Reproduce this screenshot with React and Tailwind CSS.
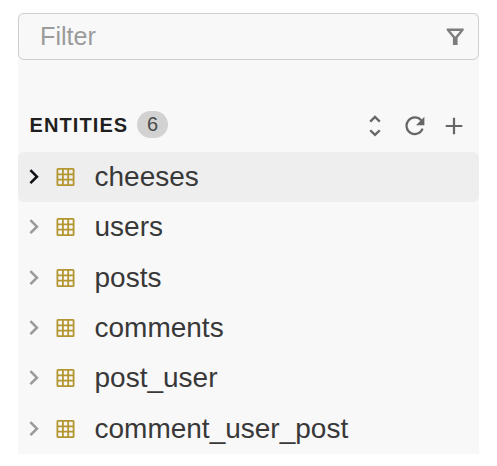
import React from "react";

const entities = ["cheeses", "users", "posts", "comments", "post_user", "comment_user_post"];

function Chevron({ active }) {
  return (
    <svg width="12" height="18" viewBox="0 0 12 18" fill="none" strokeWidth="2.6" className={active ? "stroke-[#111118]" : "stroke-[#9b9b9b]"}>
      <path d="M2.4 2.2 8.9 8.7 2.4 15.2" />
    </svg>
  );
}

function TableIcon() {
  return (
    <svg width="18" height="18" viewBox="0 0 18 18" fill="none" stroke="#b3962f" strokeWidth="1.8" className="overflow-visible">
      <rect x="0.4" y="0.9" width="16.2" height="16.2" rx="0.6" />
      <path d="M5.9 1v16M11.2 1v16M0.6 6.4h16M0.6 11.7h16" />
    </svg>
  );
}

function FilterIcon() {
  return (
    <svg width="18" height="18" viewBox="0 0 18 18">
      <path fill="#7d7d7d" fillRule="evenodd" d="M0.7 0.5h17v1.7l-6.1 7.6V17H6.9V9.8L0.7 2.2ZM4.3 2.9 9.2 8.8l4.9-5.9Z" />
    </svg>
  );
}

export default function App() {
  return (
    <div className="h-[466px] w-[497px] bg-white pt-[13px] pl-[18px] font-['Liberation_Sans',Arial,sans-serif]">
      <div className="h-[441px] w-[461px] bg-[#f8f8f8]">
        <div className="flex h-[47px] items-center justify-between rounded-[6px] border border-[#cecece] pr-[14px] pl-[21px]">
          <span className="text-[25.2px] leading-[45px] text-[#9b9b9b]">Filter</span>
          <FilterIcon />
        </div>
        <div className="mt-[51px] flex h-[27px] items-center pl-[11px]">
          <span className="w-[100px] pt-px pl-[0.5px] text-[20px] leading-[27px] font-bold tracking-[1.1px] text-[#1f1f1f]">ENTITIES</span>
          <span className="ml-[8px] flex h-[27px] w-[31px] items-center justify-center rounded-full bg-[#d2d2d2] text-[20px] leading-[27px] text-[#4a4a4a]">6</span>
          <div className="mr-[16px] ml-auto flex h-[27px] items-start text-[#666666]">
            <svg width="12" height="22" viewBox="0 0 12 22" fill="none" stroke="currentColor" strokeWidth="2.3" className="mt-[4px]">
              <path d="M1.2 6.6 6 1.9l4.8 4.7M1.2 15.2 6 19.9l4.8-4.7" />
            </svg>
            <svg width="20" height="20" viewBox="0 0 20 20" className="mt-[5px] ml-[24px]">
              <path d="M16.1 4.3A8.3 8.3 0 1 0 17.6 12.7" fill="none" stroke="currentColor" strokeWidth="2.2" />
              <path d="M19.4 0.8v8.4h-8.4Z" fill="currentColor" />
            </svg>
            <svg width="18" height="18" viewBox="0 0 18 18" stroke="currentColor" strokeWidth="2.2" className="mt-[6px] ml-[20px]">
              <path d="M0.7 9h16.6M9 0.7v16.6" />
            </svg>
          </div>
        </div>
        <div className="mt-[14px]">
          {entities.map((name, i) => (
            <div key={name} className={`flex h-[50.3px] items-center rounded-[6px] pl-[10px] ${i === 0 ? "bg-[#eeeeee]" : ""}`}>
              <Chevron active={i === 0} />
              <span className="ml-[16.5px]"><TableIcon /></span>
              <span className="ml-[20px] text-[28px] leading-[50px] text-[#383838]">{name}</span>
            </div>
          ))}
        </div>
      </div>
    </div>
  );
}
